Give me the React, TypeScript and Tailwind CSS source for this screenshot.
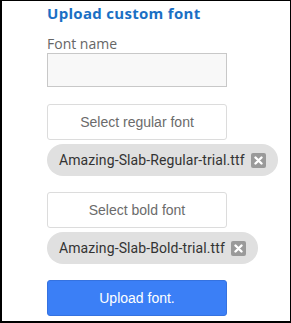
import React from "react";

function Chip({ name }: { name: string }) {
  return (
    <div className="w-fit h-[32px] rounded-full bg-[#e0e0e0] flex items-center pl-[12px] pr-[12px] gap-[6px]">
      <span
        className="text-[14px] tracking-[0.1px] text-[#333] leading-none"
        style={{ fontFamily: "Roboto, sans-serif" }}
      >
        {name}
      </span>
      <span className="w-[15px] h-[15px] rounded-[2px] bg-[#9a9a9a] flex items-center justify-center">
        <svg width="9" height="9" viewBox="0 0 9 9">
          <path d="M1.5 1.5L7.5 7.5M7.5 1.5L1.5 7.5" stroke="white" strokeWidth="2.4" strokeLinecap="round" />
        </svg>
      </span>
    </div>
  );
}

export default function App() {
  return (
    <div className="w-[291px] h-[323px] border-t border-r border-l-2 border-b-2 border-black bg-white box-border">
      <div className="pl-[45px] flex flex-col">
        <div
          className="mt-[2px] text-[15px] font-bold tracking-[0.3px] text-[#1a6fc4] leading-[20px]"
          style={{ fontFamily: "'Open Sans', sans-serif" }}
        >
          Upload custom font
        </div>
        <div
          className="mt-[12px] text-[14px] text-[#666] leading-[17px]"
          style={{ fontFamily: "'Open Sans', sans-serif" }}
        >
          Font name
        </div>
        <div className="mt-[1px] w-[180px] h-[34px] border border-[#c8c8c8] bg-[#f8f8f8]" />
        <div
          className="mt-[17px] w-[180px] h-[36px] border border-[#dcdcdc] rounded-[3px] flex items-center justify-center text-[14px] text-[#6b6b6b]"
          style={{ fontFamily: "'Liberation Sans', Arial, sans-serif" }}
        >
          Select regular font
        </div>
        <div className="mt-[4px]">
          <Chip name="Amazing-Slab-Regular-trial.ttf" />
        </div>
        <div
          className="mt-[16px] w-[180px] h-[36px] border border-[#dcdcdc] rounded-[3px] flex items-center justify-center text-[14px] text-[#6b6b6b]"
          style={{ fontFamily: "'Liberation Sans', Arial, sans-serif" }}
        >
          Select bold font
        </div>
        <div className="mt-[4px]">
          <Chip name="Amazing-Slab-Bold-trial.ttf" />
        </div>
        <div
          className="mt-[16px] w-[180px] h-[36px] rounded-[3px] bg-[#3b7ff6] border border-[#3572e0] flex items-center justify-center text-[14px] text-white"
          style={{ fontFamily: "'Liberation Sans', Arial, sans-serif" }}
        >
          Upload font.
        </div>
      </div>
    </div>
  );
}
